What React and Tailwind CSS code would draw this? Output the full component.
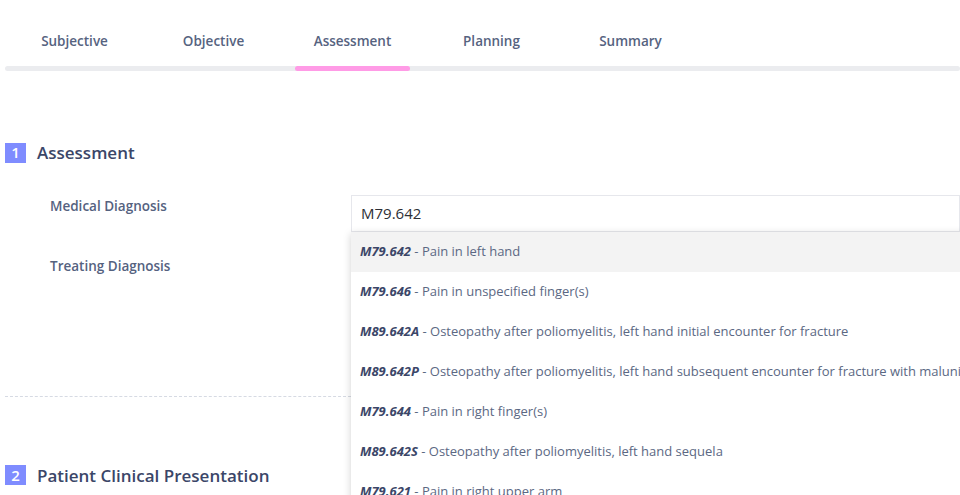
import React from "react";

const tabs = ["Subjective", "Objective", "Assessment", "Planning", "Summary"];

const options = [
  ["M79.642", "Pain in left hand"],
  ["M79.646", "Pain in unspecified finger(s)"],
  ["M89.642A", "Osteopathy after poliomyelitis, left hand initial encounter for fracture"],
  ["M89.642P", "Osteopathy after poliomyelitis, left hand subsequent encounter for fracture with malunion"],
  ["M79.644", "Pain in right finger(s)"],
  ["M89.642S", "Osteopathy after poliomyelitis, left hand sequela"],
  ["M79.621", "Pain in right upper arm"],
];

function SectionTitle({ n, children }) {
  return (
    <div className="flex items-center gap-[11px]">
      <span className="w-[21px] h-[20px] bg-[#7f8cff] text-white text-[15px] font-semibold flex items-center justify-center leading-none">
        {n}
      </span>
      <h2 className="text-[17px] font-semibold text-[#3b4668]">{children}</h2>
    </div>
  );
}

export default function App() {
  return (
    <div className="w-[960px] h-[495px] overflow-hidden bg-white font-['Open_Sans',sans-serif]">
      {/* Tabs */}
      <div className="pt-[30px] pl-[5px]">
        <div className="flex">
          {tabs.map((t) => (
            <div key={t} className="w-[139px] flex flex-col items-center">
              <span className="text-[13.5px] font-semibold text-[#56637f] h-[22px] leading-[22px]">{t}</span>
            </div>
          ))}
        </div>
        <div className="mt-[14px] h-[5px] bg-[#ebecef] rounded-full relative">
          <div className="absolute left-[290px] top-0 w-[115px] h-[5px] rounded-full bg-[#ff9be6]" />
        </div>
      </div>

      {/* Section 1 */}
      <div className="pl-[5px] mt-[69px]">
        <SectionTitle n="1">Assessment</SectionTitle>

        <div className="flex mt-[29px]">
          <div className="w-[346px] pl-[45px] flex flex-col">
            <div className="h-[20px] text-[13.5px] font-semibold text-[#55627f] mt-[1px]">Medical Diagnosis</div>
            <div className="h-[20px] text-[13.5px] font-semibold text-[#55627f] mt-[40px]">Treating Diagnosis</div>
            <div className="mt-[120px] border-t border-dashed border-[#d6dae3] w-[346px] -ml-[45px]" />
          </div>

          <div className="relative flex-1">
            <div className="h-[37px] border border-[#e6e7ec] flex items-center pl-[9px] text-[15px] text-[#2d2f36] bg-white">
              M79.642
            </div>
            <div className="absolute left-0 top-[37px] w-[700px] bg-white shadow-[0_2px_8px_rgba(0,0,0,0.18)] z-10">
              {options.map(([code, desc], i) => (
                <div
                  key={code}
                  className={`h-[40px] flex items-center pl-[9px] text-[13px] whitespace-nowrap text-[#5b6883] ${i === 0 ? "bg-[#f3f3f3]" : ""}`}
                >
                  <span className="italic font-bold text-[#3b4668]">{code}</span>
                  <span>&nbsp;- {desc}</span>
                </div>
              ))}
            </div>
          </div>
        </div>

        <div className="mt-[66px]">
          <SectionTitle n="2">Patient Clinical Presentation</SectionTitle>
        </div>
      </div>
    </div>
  );
}
